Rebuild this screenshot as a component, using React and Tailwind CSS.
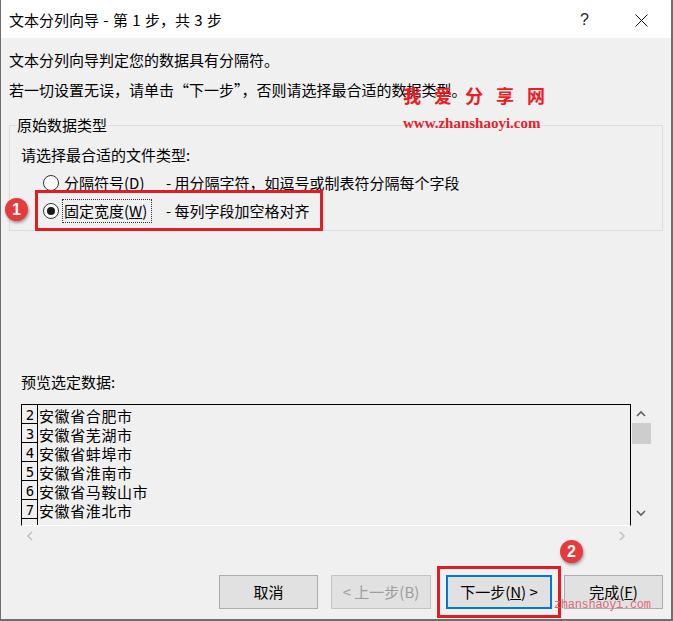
import React from 'react';

const rows = ['安徽省合肥市', '安徽省芜湖市', '安徽省蚌埠市', '安徽省淮南市', '安徽省马鞍山市', '安徽省淮北市'];

function Chevron({ dir, className }) {
  const d = {
    up: 'M1 6 L5 2 L9 6',
    down: 'M1 2 L5 6 L9 2',
    left: 'M6 1 L2 5 L6 9',
    right: 'M2 1 L6 5 L2 9',
  }[dir];
  const box = dir === 'up' || dir === 'down' ? '0 0 10 8' : '0 0 8 10';
  const size = dir === 'up' || dir === 'down' ? 'w-[10px] h-[8px]' : 'w-[8px] h-[10px]';
  return (
    <svg viewBox={box} className={`${size} ${className}`} fill="none" stroke="currentColor" strokeWidth="1.6">
      <path d={d} />
    </svg>
  );
}

function Radio({ checked }) {
  return (
    <span className="w-[16px] h-[16px] rounded-full border border-[#333] bg-white flex items-center justify-center shrink-0">
      {checked && <span className="w-[8px] h-[8px] rounded-full bg-[#1a1a1a]" />}
    </span>
  );
}

function Badge({ n, className }) {
  return (
    <div className={`absolute rounded-full bg-[#e53a3e] text-white font-bold flex items-center justify-center shadow-[1px_2px_3px_rgba(0,0,0,0.35)] font-['Liberation_Sans',sans-serif] ${className}`}>
      {n}
    </div>
  );
}

export default function App() {
  return (
    <div className="relative w-[673px] h-[621px] flex flex-col border-l border-r-2 border-b-2 border-[#6f6f6f] bg-[#f0f0f0] text-black text-[15px] font-['Noto_Sans_CJK_SC',sans-serif] overflow-hidden">
      {/* title bar */}
      <div className="h-[38px] bg-white flex items-center pl-[8px] shrink-0">
        <span className="leading-[20px] mt-[2px] [word-spacing:1px]">文本分列向导 - 第 1 步，共 3 步</span>
        <span className="ml-auto mr-[46px] mt-[2px] font-['Liberation_Sans',sans-serif] text-[16px] text-[#222]">?</span>
        <svg viewBox="0 0 13 13" className="w-[13px] h-[13px] mr-[23px] mt-[2px]" stroke="#111" strokeWidth="1">
          <path d="M0.5 0.5 L12.5 12.5 M12.5 0.5 L0.5 12.5" />
        </svg>
      </div>

      {/* body */}
      <div className="flex-1 flex flex-col px-[8px]">
        <p className="mt-[12px] leading-[20px]">文本分列向导判定您的数据具有分隔符。</p>
        <p className="mt-[10px] leading-[20px]">若一切设置无误，请单击“下一步”，否则请选择最合适的数据类型。</p>

        <fieldset className="mt-[15px] w-[654px] border border-[#dcdcdc] pl-[7px] pb-[7px]">
          <legend className="leading-[20px] pr-[2px]">原始数据类型</legend>
          <p className="ml-[4px] mt-[10px] leading-[20px]">请选择最合适的文件类型:</p>
          <div className="flex items-center mt-[5px] h-[25px]">
            <span className="ml-[26px]"><Radio /></span>
            <span className="ml-[4px] w-[89px] border border-transparent leading-[20px] py-[1px]">
              分隔符号(<span className="underline">D</span>)
            </span>
            <span className="ml-[14px] leading-[20px]">- 用分隔字符，如逗号或制表符分隔每个字段</span>
          </div>
          <div className="flex items-center mt-[3px] h-[25px]">
            <span className="ml-[26px]"><Radio checked /></span>
            <span className="ml-[3px] w-[90px] border border-dotted border-[#333] leading-[20px] py-[1px] pl-[1px]">
              固定宽度(<span className="underline">W</span>)
            </span>
            <span className="ml-[14px] leading-[20px]">- 每列字段加空格对齐</span>
          </div>
        </fieldset>

        <p className="mt-[141px] ml-[12px] leading-[20px]">预览选定数据:</p>

        <div className="mt-[12px] ml-[12px] flex">
          <div className="w-[610px] h-[122px] border-t border-l border-r border-b border-black border-b-white overflow-hidden">
            {[...rows, ''].map((r, i) => (
              <div key={i} className="flex h-[19px]">
                <span className="w-[16px] h-[19px] shrink-0 border-r border-b border-black text-[14px] leading-[21px] text-center font-['DejaVu_Sans_Mono',monospace] tracking-[-1px]">
                  {r ? i + 2 : ''}
                </span>
                <span className="ml-[1px] leading-[21px] tracking-[0.6px]">{r}</span>
              </div>
            ))}
          </div>
          <div className="w-[20px] h-[122px] flex flex-col items-center">
            <Chevron dir="up" className="text-[#606060] mt-[6px]" />
            <div className="w-[19px] h-[21px] bg-[#cdcdcd] mt-[5px]" />
            <Chevron dir="down" className="text-[#606060] mt-[65px]" />
          </div>
        </div>
        <div className="ml-[12px] w-[610px] h-[20px] flex items-center justify-between px-[5px]">
          <Chevron dir="left" className="text-[#c2c2c2]" />
          <Chevron dir="right" className="text-[#c2c2c2]" />
        </div>

        <div className="mt-[29px] flex justify-end">
          <button className="w-[99px] h-[34px] bg-[#e1e1e1] border border-[#adadad] mr-[13px]">取消</button>
          <button className="w-[100px] h-[34px] bg-[#e1e1e1] border border-[#c4c4c4] text-[#9d9d9d] mr-[15px]">&lt; 上一步(B)</button>
          <button className="w-[106px] h-[34px] bg-[#e1e1e1] border-2 border-[#0078d7] mr-[12px]">
            下一步(<span className="underline">N</span>) &gt;
          </button>
          <button className="w-[99px] h-[34px] bg-[#e1e1e1] border border-[#adadad]">
            完成(<span className="underline">F</span>)
          </button>
        </div>
      </div>

      {/* annotations */}
      <div className="absolute left-[34px] top-[190px] w-[288px] h-[41px] border-[3px] border-[#e31c23]" />
      <Badge n="1" className="left-[4px] top-[198px] w-[23px] h-[23px] text-[16px]" />
      <div className="absolute left-[436px] top-[566px] w-[124px] h-[52px] border-[3px] border-[#e31c23]" />
      <Badge n="2" className="left-[559px] top-[540px] w-[23px] h-[23px] text-[16px]" />

      {/* watermarks */}
      <div className="absolute left-[402px] top-[83px] flex gap-[13px] text-[18px] leading-[24px] font-bold text-[#ec1c24]">
        <span>我</span><span>爱</span><span>分</span><span>享</span><span>网</span>
      </div>
      <div className="absolute left-[402px] top-[113px] text-[15px] leading-[20px] font-bold text-[#e8202a] font-['Liberation_Serif',serif]">
        www.zhanshaoyi.com
      </div>
      <div className="absolute left-[553px] top-[596px] text-[12px] leading-[18px] text-[#e2566a]/90 font-['Liberation_Mono',monospace] tracking-[-0.3px]">
        zhanshaoyi.com
      </div>
    </div>
  );
}
